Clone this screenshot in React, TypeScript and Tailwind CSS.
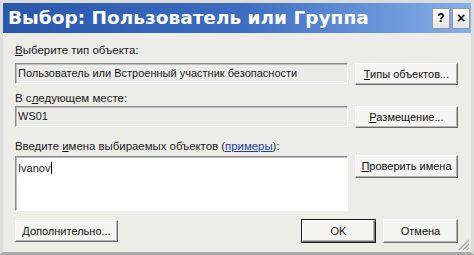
import React from "react";

const ui = { fontFamily: '"Liberation Sans", Arial, sans-serif' };

function Btn({
  children,
  className = "",
  def = false,
}: {
  children: React.ReactNode;
  className?: string;
  def?: boolean;
}) {
  return (
    <div
      className={
        "flex h-[22px] items-center justify-center text-[11px] text-[#111] " +
        (def ? "border border-[#1a1a1a] " : "") +
        className
      }
    >
      <div className="flex h-full w-full items-center justify-center border border-t-[#ffffff] border-l-[#ffffff] border-r-[#6a6a6a] border-b-[#6a6a6a] bg-[#f4f4f2] shadow-[inset_-1px_-1px_0_#b4b4b4]">
        {children}
      </div>
    </div>
  );
}

function Field({ children }: { children: React.ReactNode }) {
  return (
    <div className="flex h-[21px] flex-1 items-center border border-t-[#8a8a8a] border-l-[#8a8a8a] border-r-[#ffffff] border-b-[#ffffff] bg-[#ebebe9] pl-[2px] text-[11px] text-[#1a1a1a] shadow-[inset_1px_1px_0_#bdbdbd]">
      {children}
    </div>
  );
}

export default function App() {
  return (
    <div
      className="relative h-[255px] w-[474px] overflow-hidden border-[3px] border-[#dcdcda] border-b-[#a8a8a8] bg-[#ecece9]"
      style={ui}
    >
      {/* Title bar */}
      <div className="flex h-[30px] items-center justify-between bg-gradient-to-r from-[#2858ac] via-[#3c6cc0] to-[#86b0ea] pl-[5px] pr-[1px]">
        <span
          className="text-[18.5px] font-bold text-white"
          style={{ fontFamily: '"DejaVu Sans", Verdana, sans-serif' }}
        >
          Выбор: Пользователь или Группа
        </span>
        <div className="flex gap-[2px]">
          <div className="flex h-[21px] w-[18px] items-center justify-center border border-[#9a9a9a] bg-gradient-to-b from-white to-[#e4e4e4] text-[12px] font-bold text-black">
            ?
          </div>
          <div className="flex h-[21px] w-[18px] items-center justify-center border border-[#9a9a9a] bg-gradient-to-b from-white to-[#e4e4e4] text-[14px] font-bold leading-none text-black">
            ×
          </div>
        </div>
      </div>

      {/* Body */}
      <div className="flex flex-col pl-[12px] pr-[13px]">
        <div className="mt-[10px] h-[14px] text-[11.5px] leading-[14px] text-[#1a1a1a]">
          <span className="underline">В</span>ыберите тип объекта:
        </div>
        <div className="mt-[6px] flex gap-[7px]">
          <Field>Пользователь или Встроенный участник безопасности</Field>
          <Btn className="w-[103px]">
            <span>
              <span className="underline">Т</span>ипы объектов...
            </span>
          </Btn>
        </div>

        <div className="mt-[6px] h-[14px] text-[11.5px] leading-[14px] text-[#1a1a1a]">
          В с<span className="underline">л</span>едующем месте:
        </div>
        <div className="mt-[1px] flex gap-[7px]">
          <Field>WS01</Field>
          <Btn className="w-[103px]">
            <span>
              <span className="underline">Р</span>азмещение...
            </span>
          </Btn>
        </div>

        <div className="mt-[11px] h-[14px] text-[11.4px] leading-[14px] text-[#1a1a1a]">
          Введите <span className="underline">и</span>мена выбираемых объектов (
          <span className="text-[#2040a8] underline">примеры</span>):
        </div>
        <div className="mt-[3px] flex items-start gap-[7px]">
          <div className="h-[55px] flex-1 border border-t-[#8a8a8a] border-l-[#8a8a8a] border-r-[#ffffff] border-b-[#ffffff] bg-white pl-[2px] pt-[3px] text-[11px] leading-[14px] text-[#1a1a1a] shadow-[inset_1px_1px_0_#bdbdbd]">
            Ivanov
            <span className="ml-[1px] inline-block h-[12px] w-px translate-y-[2px] bg-black" />
          </div>
          <Btn className="mt-[-1px] h-[23px] w-[103px]">
            <span>
              <span className="underline">П</span>роверить имена
            </span>
          </Btn>
        </div>

        <div className="mt-[8px] flex items-center">
          <Btn className="w-[103px]">
            <span>
              <span className="underline">Д</span>ополнительно...
            </span>
          </Btn>
          <div className="flex-1" />
          <Btn def className="h-[24px] w-[75px]">
            OK
          </Btn>
          <Btn className="ml-[7px] h-[24px] w-[75px]">Отмена</Btn>
        </div>
      </div>

      {/* Resize grip */}
      <svg
        className="absolute bottom-[1px] right-[1px]"
        width="12"
        height="12"
        viewBox="0 0 12 12"
      >
        <path d="M11 1 L1 11 M11 5 L5 11 M11 9 L9 11" stroke="#a0a0a0" strokeWidth="1.2" />
        <path d="M12 2 L2 12 M12 6 L6 12 M12 10 L10 12" stroke="#ffffff" strokeWidth="1" />
      </svg>
    </div>
  );
}
